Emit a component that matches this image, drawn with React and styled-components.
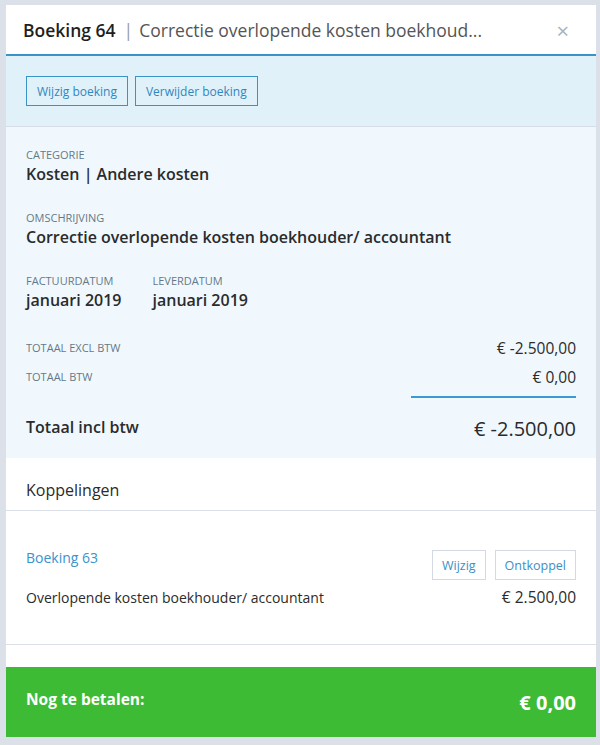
import React from 'react';
import styled, { createGlobalStyle } from 'styled-components';

const GlobalStyle = createGlobalStyle`
  html, body {
    margin: 0;
    padding: 0;
    background: #dce0e9;
    font-family: "Open Sans", "Noto Sans", sans-serif;
    color: #2b2b2b;
  }
`;

const Page = styled.div`
  padding: 5px 4px 8px 6px;
`;

const Panel = styled.div`
  background: #fff;
  display: flex;
  flex-direction: column;
`;

const Header = styled.div`
  height: 49px;
  display: flex;
  align-items: center;
  padding: 0 27px 0 17px;
  border-bottom: 2px solid #3a93c6;
`;

const Title = styled.div`
  flex: 1;
  font-size: 17.5px;
  white-space: nowrap;
  overflow: hidden;
`;

const TitleStrong = styled.span`
  font-weight: 600;
  color: #1f1f1f;
`;

const TitleSep = styled.span`
  color: #9a9a9a;
  margin: 0 6px 0 8px;
`;

const TitleRest = styled.span`
  color: #555;
  font-weight: 400;
`;

const Close = styled.span`
  color: #a6b4bd;
  font-size: 22px;
  line-height: 1;
`;

const ActionBar = styled.div`
  background: #e1f1fa;
  padding: 20px 20px;
  display: flex;
  gap: 7px;
  border-bottom: 1px solid #d6dde6;
`;

const Button = styled.button`
  font-family: inherit;
  font-size: ${p => (p.$light ? '12.5px' : '12px')};
  color: ${p => (p.$light ? '#3a8fc6' : '#2f86bf')};
  background: ${p => (p.$light ? '#fff' : 'transparent')};
  border: 1px solid ${p => (p.$light ? '#d3dae3' : '#3a93c6')};
  height: 30px;
  padding: 0 ${p => (p.$light ? '9px' : '10px')};
  cursor: pointer;
`;

const Details = styled.div`
  background: #f0f8fe;
  padding: 21px 20px 16px 20px;
`;

const Field = styled.div`
  margin-bottom: 26px;
`;

const FieldRow = styled.div`
  display: flex;
  gap: 31px;
  margin-bottom: 22px;
`;

const Label = styled.div`
  font-size: 11px;
  color: #667887;
  text-transform: uppercase;
  line-height: 14px;
`;

const Value = styled.div`
  font-size: 16px;
  font-weight: 600;
  color: #2b2b2b;
  line-height: 22px;
  margin-top: 1px;
`;

const TotalRow = styled.div`
  display: flex;
  justify-content: space-between;
  align-items: center;
  height: 29px;
`;

const Amount = styled.div`
  font-size: 15.5px;
  color: #2b2b2b;
`;

const Divider = styled.div`
  display: flex;
  justify-content: flex-end;
  margin: 5px 0 16px;
`;

const DividerLine = styled.div`
  width: 165px;
  height: 2px;
  background: #3a9ad2;
`;

const GrandRow = styled.div`
  display: flex;
  justify-content: space-between;
  align-items: center;
  height: 28px;
`;

const GrandLabel = styled.div`
  font-size: 16px;
  font-weight: 600;
  margin-top: -3px;
`;

const GrandAmount = styled.div`
  font-size: 20px;
  font-weight: 500;
`;

const SectionHead = styled.div`
  padding: 21px 20px 0;
  height: 31px;
  font-size: 16px;
  line-height: 22px;
  color: #2b2b2b;
  border-bottom: 1px solid #dbe0e8;
`;

const Links = styled.div`
  padding: 37px 20px 37px;
  border-bottom: 1px solid #dbe0e8;
`;

const LinkTop = styled.div`
  display: flex;
  justify-content: space-between;
  align-items: flex-start;
`;

const LinkTitle = styled.a`
  color: #3a93cc;
  font-size: 14px;
  text-decoration: none;
  line-height: 20px;
`;

const LinkButtons = styled.div`
  display: flex;
  gap: 9px;
  margin-top: 2px;
`;

const LinkRow = styled.div`
  display: flex;
  justify-content: space-between;
  align-items: center;
  font-size: 14px;
  line-height: 19px;
  color: #2b2b2b;
  margin-top: 8px;
`;

const Spacer = styled.div`
  height: 22px;
`;

const Footer = styled.div`
  background: #3dbb35;
  color: #fff;
  height: 70px;
  padding: 0 20px;
  display: flex;
  justify-content: space-between;
  align-items: center;
  font-weight: 700;
`;

const FooterLabel = styled.div`
  font-size: 15.5px;
  margin-top: -6px;
`;

const FooterAmount = styled.div`
  font-size: 20px;
`;

export default function App() {
  return (
    <Page>
      <GlobalStyle />
      <Panel>
        <Header>
          <Title>
            <TitleStrong>Boeking 64</TitleStrong>
            <TitleSep>|</TitleSep>
            <TitleRest>Correctie overlopende kosten boekhoud...</TitleRest>
          </Title>
          <Close>×</Close>
        </Header>
        <ActionBar>
          <Button>Wijzig boeking</Button>
          <Button>Verwijder boeking</Button>
        </ActionBar>
        <Details>
          <Field>
            <Label>Categorie</Label>
            <Value>Kosten | Andere kosten</Value>
          </Field>
          <Field>
            <Label>Omschrijving</Label>
            <Value>Correctie overlopende kosten boekhouder/ accountant</Value>
          </Field>
          <FieldRow>
            <div>
              <Label>Factuurdatum</Label>
              <Value>januari 2019</Value>
            </div>
            <div>
              <Label>Leverdatum</Label>
              <Value>januari 2019</Value>
            </div>
          </FieldRow>
          <TotalRow>
            <Label>Totaal excl btw</Label>
            <Amount>€ -2.500,00</Amount>
          </TotalRow>
          <TotalRow>
            <Label>Totaal btw</Label>
            <Amount>€ 0,00</Amount>
          </TotalRow>
          <Divider>
            <DividerLine />
          </Divider>
          <GrandRow>
            <GrandLabel>Totaal incl btw</GrandLabel>
            <GrandAmount>€ -2.500,00</GrandAmount>
          </GrandRow>
        </Details>
        <SectionHead>Koppelingen</SectionHead>
        <Links>
          <LinkTop>
            <LinkTitle href="#">Boeking 63</LinkTitle>
            <LinkButtons>
              <Button $light>Wijzig</Button>
              <Button $light>Ontkoppel</Button>
            </LinkButtons>
          </LinkTop>
          <LinkRow>
            <span>Overlopende kosten boekhouder/ accountant</span>
            <Amount>€ 2.500,00</Amount>
          </LinkRow>
        </Links>
        <Spacer />
        <Footer>
          <FooterLabel>Nog te betalen:</FooterLabel>
          <FooterAmount>€ 0,00</FooterAmount>
        </Footer>
      </Panel>
    </Page>
  );
}
